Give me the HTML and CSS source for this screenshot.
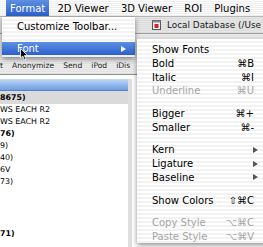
FILE: index.html
```html
<!DOCTYPE html>
<html>
<head>
<meta charset="utf-8">
<link rel="stylesheet" href="styles.css">
</head>
<body>
<div class="screen">
  <div class="menubar">
    <span class="mb-item active">Format</span>
    <span class="mb-item">2D Viewer</span>
    <span class="mb-item">3D Viewer</span>
    <span class="mb-item">ROI</span>
    <span class="mb-item">Plugins</span>
  </div>

  <div class="window">
    <div class="titlebar">
      <svg class="doc-icon" width="9" height="10" viewBox="0 0 9 10">
        <rect x="0.5" y="0.5" width="8" height="9" fill="#f4f4f4" stroke="#555"/>
        <rect x="0.5" y="0.5" width="8" height="2" fill="#8a8a8a"/>
        <rect x="2.5" y="4" width="4" height="4" fill="#d0242a"/>
      </svg>
      <span class="title">Local Database (/Use</span>
    </div>
    <div class="toolbar">
      <div class="tb-icons"></div>
      <div class="tb-labels">
        <span>t</span>
        <span>Anonymize</span>
        <span>Send</span>
        <span>iPod</span>
        <span>iDis</span>
      </div>
    </div>
    <div class="content">
      <div class="list">
        <div class="list-head"></div>
        <div class="row first bold">8675)</div>
        <div class="row">WS EACH R2</div>
        <div class="row">WS EACH R2</div>
        <div class="row bold">76)</div>
        <div class="row">9)</div>
        <div class="row">40)</div>
        <div class="row">6V</div>
        <div class="row">73)</div>
        <div class="row"></div>
        <div class="row"></div>
        <div class="row"></div>
        <div class="row last bold">71)</div>
      </div>
      <div class="vstrip"></div>
    </div>
  </div>

  <div class="menu format-menu">
    <div class="item">Customize Toolbar...</div>
    <div class="sep"></div>
    <div class="item hl"><span class="label">Font</span><span class="arrow"></span></div>
  </div>

  <div class="menu font-menu">
    <div class="item"><span class="label">Show Fonts</span></div>
    <div class="item"><span class="label">Bold</span><span class="key">⌘B</span></div>
    <div class="item"><span class="label">Italic</span><span class="key">⌘I</span></div>
    <div class="item off"><span class="label">Underline</span><span class="key">⌘U</span></div>
    <div class="sep"></div>
    <div class="item"><span class="label">Bigger</span><span class="key">⌘+</span></div>
    <div class="item"><span class="label">Smaller</span><span class="key">⌘-</span></div>
    <div class="sep"></div>
    <div class="item"><span class="label">Kern</span><span class="arrow"></span></div>
    <div class="item"><span class="label">Ligature</span><span class="arrow"></span></div>
    <div class="item"><span class="label">Baseline</span><span class="arrow"></span></div>
    <div class="sep"></div>
    <div class="item"><span class="label">Show Colors</span><span class="key">⇧⌘C</span></div>
    <div class="sep"></div>
    <div class="item off"><span class="label">Copy Style</span><span class="key">⌥⌘C</span></div>
    <div class="item off"><span class="label">Paste Style</span><span class="key">⌥⌘V</span></div>
  </div>

  <svg class="cursor" width="9" height="13" viewBox="0 0 9 13">
    <path d="M0.5 0.5 L0.5 10 L2.8 8 L4.5 12 L6 11.3 L4.4 7.5 L7.5 7.5 Z" fill="#000" stroke="#fff" stroke-width="0.8"/>
  </svg>
</div>
</body>
</html>
```

FILE: styles.css
```css
* { box-sizing: border-box; }

body {
  margin: 0;
  width: 263px;
  height: 247px;
  overflow: hidden;
  background: #fff;
  font-family: "DejaVu Sans", "Open Sans", sans-serif;
}

.screen {
  position: relative;
  width: 263px;
  height: 247px;
  overflow: hidden;
}

/* ---------- menu bar ---------- */
.menubar {
  display: flex;
  gap: 4.2px;
  height: 17px;
  padding-left: 6px;
  background: repeating-linear-gradient(#fbfbfb 0 1px, #efefef 1px 2px);
  border-bottom: 1px solid #b5b5b5;
  font-size: 10px;
  white-space: nowrap;
}

.mb-item {
  display: flex;
  align-items: center;
  padding: 0 4px;
  color: #000;
}

.mb-item.active {
  background: linear-gradient(#5d8fe3, #2d60cc);
  color: #fff;
}

/* ---------- background window ---------- */
.titlebar {
  display: flex;
  align-items: center;
  gap: 6px;
  height: 17px;
  padding-left: 152px;
  background: repeating-linear-gradient(#e6e6e6 0 1px, #dcdcdc 1px 2px);
  border-bottom: 1px solid #9c9c9c;
  font-size: 8.9px;
  color: #1a1a1a;
  white-space: nowrap;
}

.doc-icon { flex: none; }

.toolbar {
  height: 41px;
  background: repeating-linear-gradient(#ececec 0 1px, #e2e2e2 1px 2px);
  border-bottom: 1px solid #8e8e8e;
}

.tb-icons { height: 25px; }

.tb-labels {
  display: flex;
  gap: 9px;
  height: 13px;
  align-items: center;
  font-size: 7.6px;
  color: #222;
  white-space: nowrap;
}

.content {
  display: flex;
  padding-top: 4px;
  height: 172px;
  background: #fff;
}

.list {
  width: 128px;
  font-size: 7.9px;
  color: #000;
  white-space: nowrap;
}

.list-head {
  height: 12px;
  background: linear-gradient(#c3d9f5, #8db4ea 60%, #6f9fe2);
  border-bottom: 1px solid #5583c8;
}

.row {
  height: 12px;
  line-height: 12px;
}

.row.first {
  height: 13px;
  line-height: 13px;
  background: #dadada;
}

.row.last { margin-top: 4px; }

.bold { font-weight: 700; }

.vstrip {
  width: 4px;
  background: #dedede;
}

/* ---------- menus ---------- */
.menu {
  position: absolute;
  background: repeating-linear-gradient(#ffffff 0 2px, #f2f2f2 2px 4px);
  font-size: 10px;
  color: #000;
  white-space: nowrap;
  box-shadow: 0 2px 5px rgba(0, 0, 0, 0.45);
}

.format-menu {
  left: 2px;
  top: 17px;
  width: 133px;
  padding: 3px 0 2px;
}

.font-menu {
  left: 137px;
  top: 39px;
  width: 132px;
  padding-top: 4px;
}

.item {
  display: flex;
  align-items: center;
  height: 13.7px;
  padding: 0 15px;
}

.format-menu .item { padding-right: 9px; }

.label { flex: 1; }

.key { text-align: right; }

.item.off { color: #a6a6a6; }

.item.hl {
  background: linear-gradient(#5d8fe3, #2d60cc);
  color: #fff;
}

.sep { height: 9px; }

.format-menu .sep { height: 8px; }

.arrow {
  width: 0;
  height: 0;
  border-left: 5px solid #555;
  border-top: 3.5px solid transparent;
  border-bottom: 3.5px solid transparent;
  margin-right: -4px;
}

.format-menu .arrow { margin-right: 0; }

.item.hl .arrow { border-left-color: #fff; }

.cursor {
  position: absolute;
  left: 20px;
  top: 48px;
}
```
